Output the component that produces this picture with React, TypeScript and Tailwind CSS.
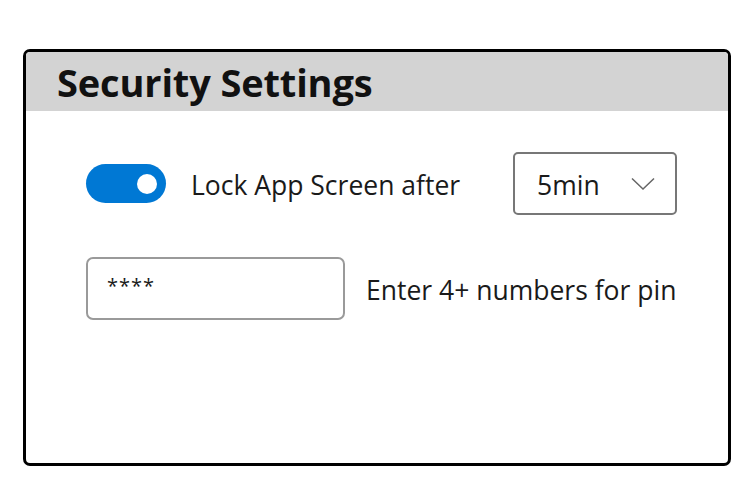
import React from "react";

export default function App() {
  return (
    <div className="w-[756px] h-[502px] bg-white pt-[49px] pl-[23px]" style={{ fontFamily: '"Open Sans", "Noto Sans", sans-serif' }}>
      <div className="w-[708px] h-[417px] border-[3px] border-black rounded-[7px] overflow-hidden flex flex-col">
        <div className="h-[59px] bg-[#d3d3d3] flex items-center pl-[31px]">
          <h1 className="text-[38px] font-bold text-[#111] leading-none tracking-[-0.15px]">Security Settings</h1>
        </div>
        <div className="flex flex-col pl-[60px] pr-[51px] pt-[41px] gap-[42px]">
          <div className="flex items-center h-[63px]">
            <div className="w-[80px] h-[39px] rounded-full bg-[#0078d4] flex items-center justify-end pr-[9px]">
              <div className="w-[20px] h-[20px] rounded-full bg-white" />
            </div>
            <span className="ml-[25px] mt-[3px] text-[26.5px] leading-none text-[#1a1a1a]">Lock App Screen after</span>
            <div className="ml-auto w-[164px] h-[63px] border-2 border-[#777] rounded-[5px] flex items-center pl-[22px] pr-[20px]">
              <span className="mt-[3px] text-[26.5px] leading-none text-[#1a1a1a]">5min</span>
              <svg className="ml-auto" width="24" height="14" viewBox="0 0 24 14" fill="none">
                <path d="M1 1.5 L12 12 L23 1.5" stroke="#666" strokeWidth="1.5" />
              </svg>
            </div>
          </div>
          <div className="flex items-center">
            <div className="w-[259px] h-[63px] border-2 border-[#9a9a9a] rounded-[7px] flex items-center pl-[19px] pb-[6px]">
              <span className="text-[20px] text-[#1a1a1a] tracking-[1px]">****</span>
            </div>
            <span className="ml-[21px] mt-[4px] text-[26.5px] leading-none text-[#1a1a1a]">Enter 4+ numbers for pin</span>
          </div>
        </div>
      </div>
    </div>
  );
}
